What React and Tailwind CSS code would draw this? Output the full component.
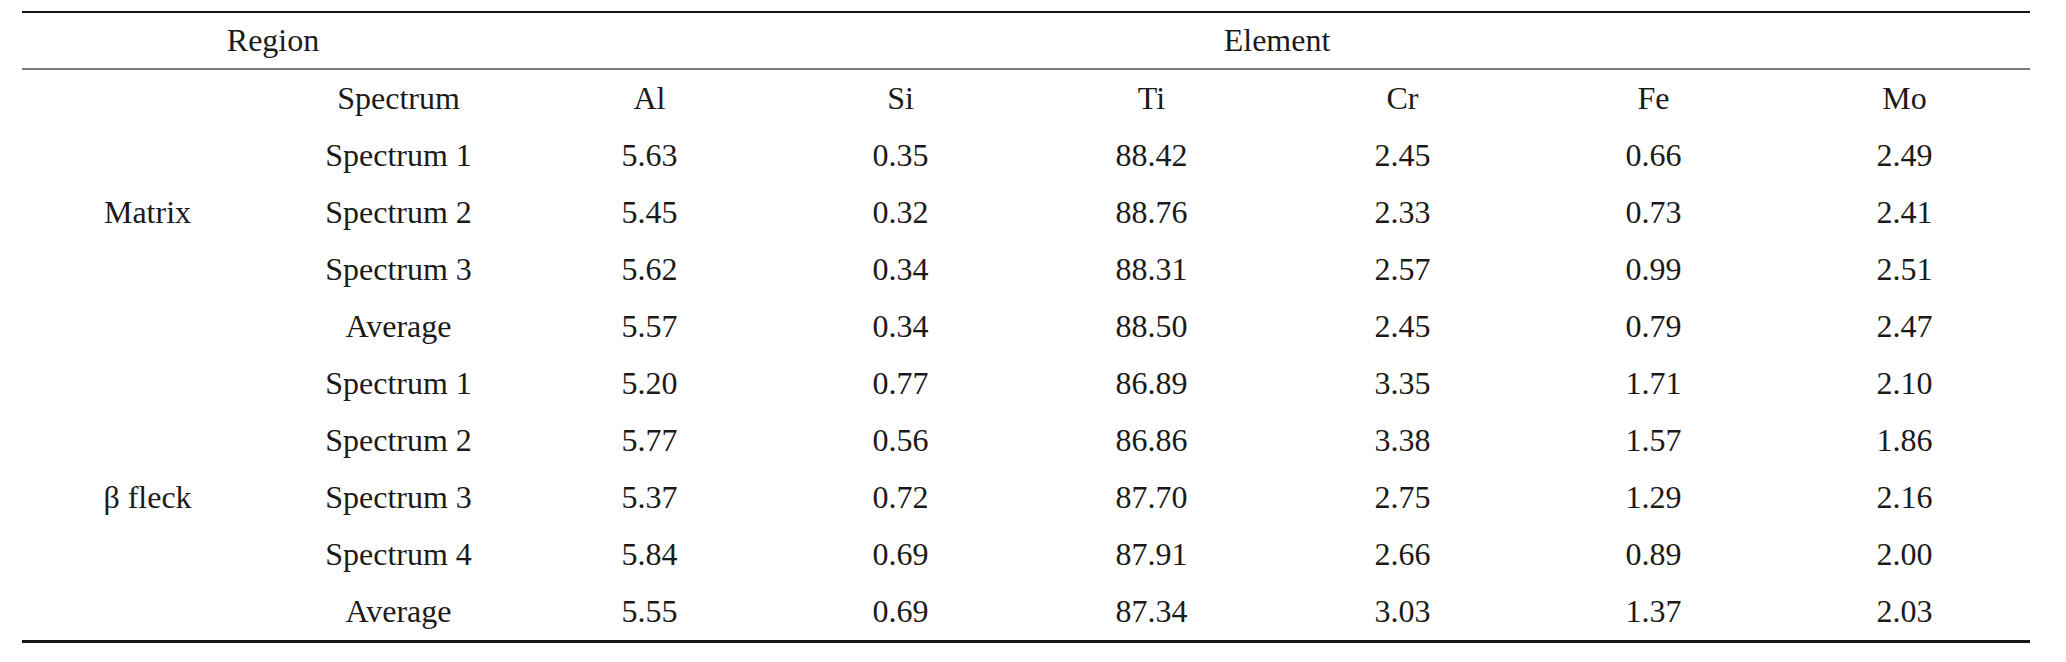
const ROWS = [
  ["", "Spectrum", "Al", "Si", "Ti", "Cr", "Fe", "Mo"],
  ["", "Spectrum 1", "5.63", "0.35", "88.42", "2.45", "0.66", "2.49"],
  ["Matrix", "Spectrum 2", "5.45", "0.32", "88.76", "2.33", "0.73", "2.41"],
  ["", "Spectrum 3", "5.62", "0.34", "88.31", "2.57", "0.99", "2.51"],
  ["", "Average", "5.57", "0.34", "88.50", "2.45", "0.79", "2.47"],
  ["", "Spectrum 1", "5.20", "0.77", "86.89", "3.35", "1.71", "2.10"],
  ["", "Spectrum 2", "5.77", "0.56", "86.86", "3.38", "1.57", "1.86"],
  ["β fleck", "Spectrum 3", "5.37", "0.72", "87.70", "2.75", "1.29", "2.16"],
  ["", "Spectrum 4", "5.84", "0.69", "87.91", "2.66", "0.89", "2.00"],
  ["", "Average", "5.55", "0.69", "87.34", "3.03", "1.37", "2.03"],
];

export default function App() {
  return (
    <div className="min-h-[662px] w-[2066px] bg-white pt-[11px] font-['Liberation_Serif','Times_New_Roman',serif] text-[32px] text-[#1c1a18]">
      <div className="ml-[22px] w-[2008px]">
        <div className="h-[2px] bg-[#151210]" />

        {/* header */}
        <div className="grid h-[55px] grid-cols-8 text-center leading-[55px]">
          <div className="col-span-2">Region</div>
          <div className="col-span-6">Element</div>
        </div>
        <div className="h-[2px] bg-[#7c7c7c]" />

        {ROWS.map((row, i) => (
          <div key={i} className="grid h-[57px] grid-cols-8 text-center leading-[57px]">
            {row.map((cell, j) => (
              <div key={j} className="whitespace-nowrap">
                {cell}
              </div>
            ))}
          </div>
        ))}

        <div className="h-[3px] bg-[#1a1612]" />
      </div>
    </div>
  );
}
